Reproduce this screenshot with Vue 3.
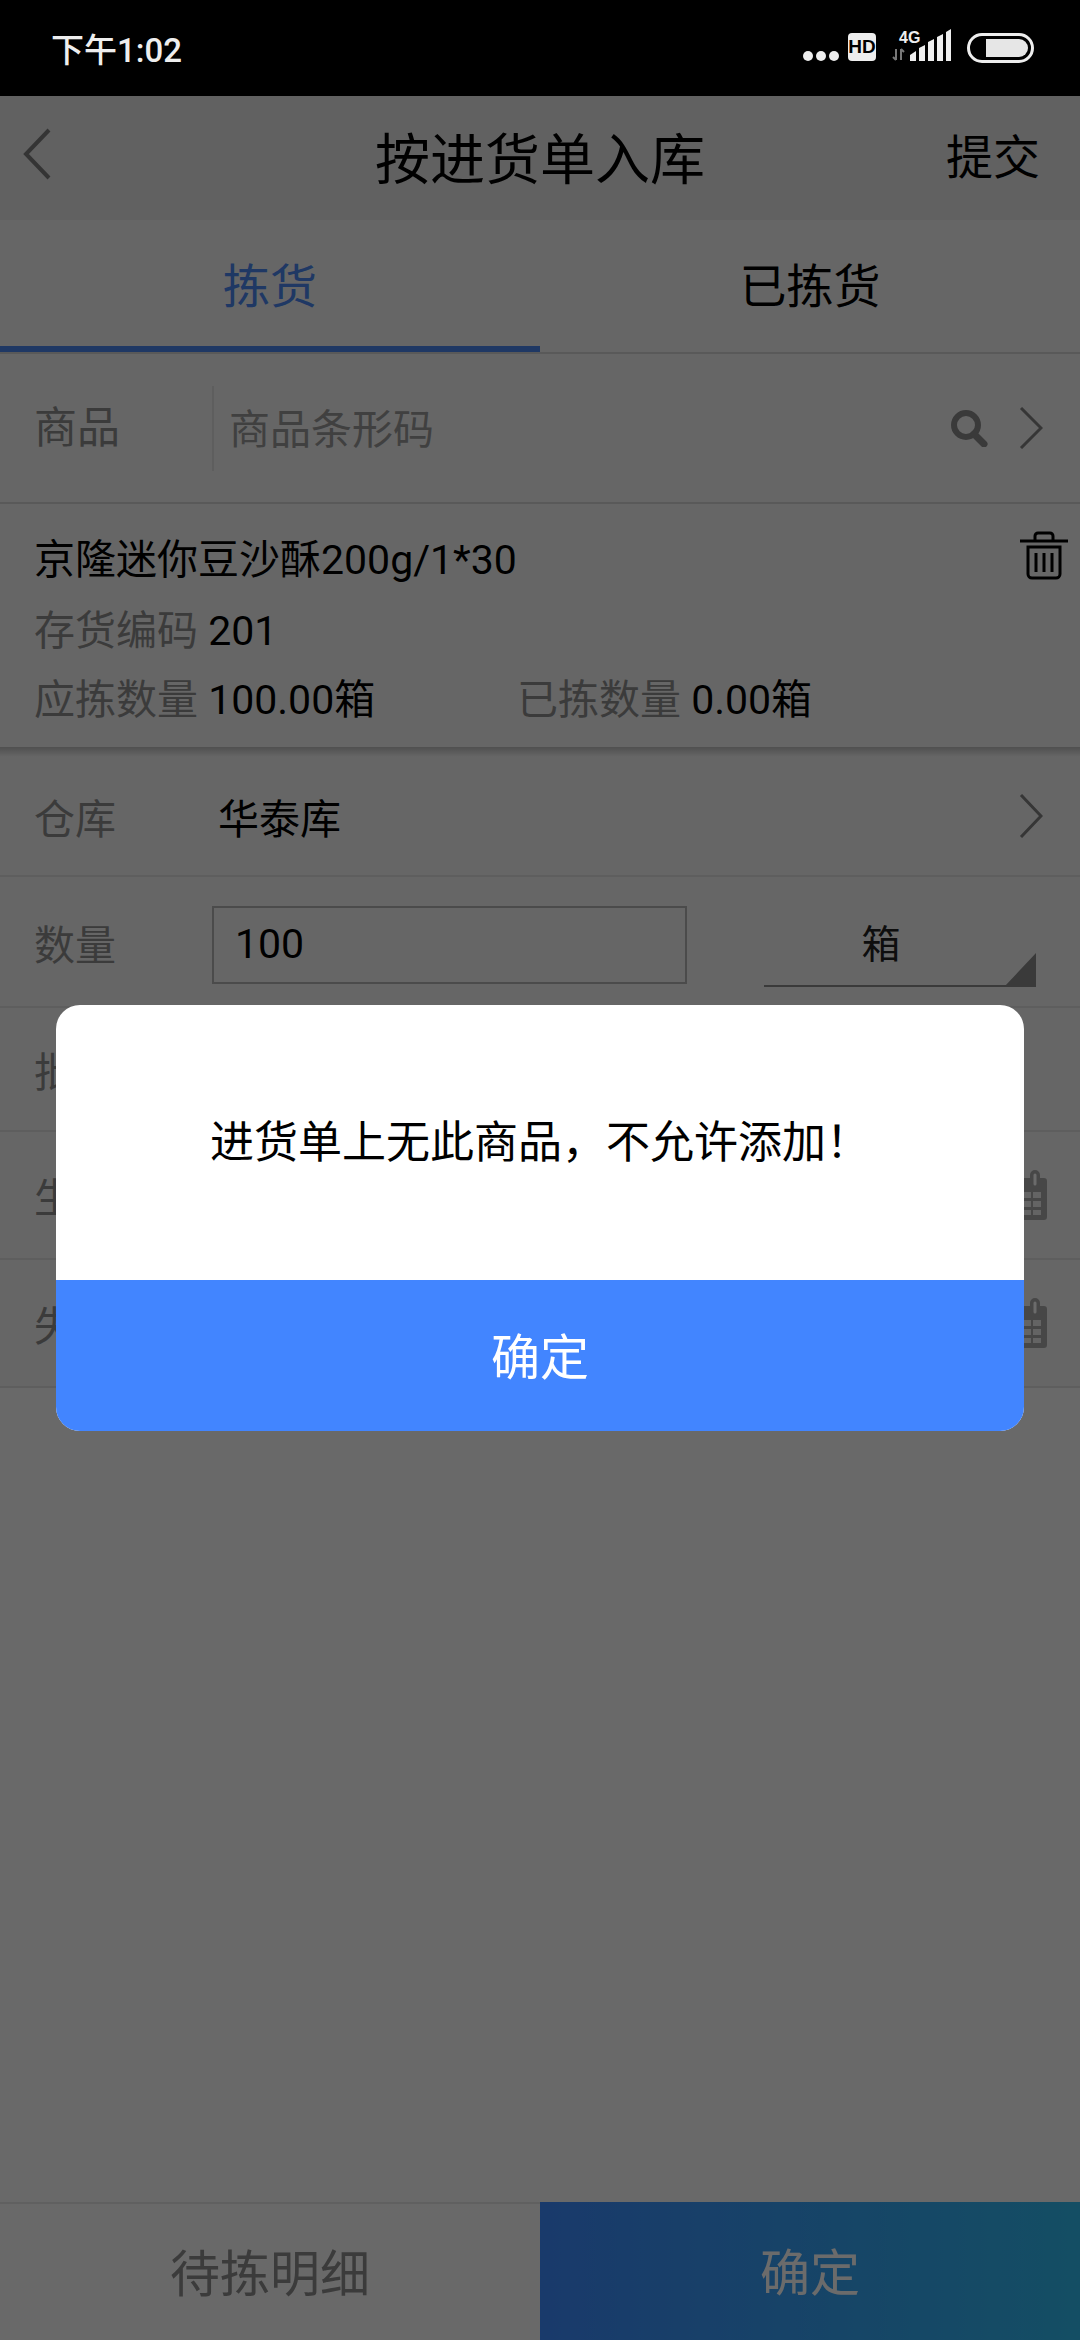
<script setup>
const dateRows = ['生产日期', '失效日期']
</script>

<template>
  <div class="page">
    <div class="status">
      <span class="time">下午1:02</span>
      <svg class="status-icons" width="240" height="40" viewBox="0 0 240 40">
        <g fill="#eee">
          <circle cx="9" cy="27" r="5" />
          <circle cx="22" cy="27" r="5" />
          <circle cx="35" cy="27" r="5" />
          <rect x="49" y="4" width="28" height="28" rx="4" />
          <path d="M111 32v-6l6-4v10zM120 32V19l6-3v16zM129 32V13l6-3v22zM138 32V8l6-3v27zM147 32V3l5-3v32z" />
        </g>
        <text x="63" y="24" class="hd">HD</text>
        <text x="100" y="14" class="net">4G</text>
        <path d="M97 20v11M94 28l3 3M102 31V20M105 23l-3-3" stroke="#777" stroke-width="2" fill="none" />
        <rect x="169.500" y="5.500" width="64" height="27" rx="13.500" fill="none" stroke="#eee" stroke-width="3" />
        <path d="M187 10h33a9 9 0 0 1 9 9a9 9 0 0 1-9 9h-33z" fill="#e6e6e6" />
      </svg>
    </div>

    <header class="nav">
      <svg class="back" width="30" height="52" viewBox="0 0 30 52">
        <path d="M27 2L4 26l23 24" fill="none" stroke="#7d7d7d" stroke-width="4" />
      </svg>
      <h1>按进货单入库</h1>
      <span class="submit">提交</span>
    </header>

    <div class="tabs">
      <div class="tab active">拣货</div>
      <div class="tab">已拣货</div>
    </div>

    <div class="goods">
      <span class="label">商品</span>
      <span class="barcode">商品条形码</span>
      <svg width="38" height="38" viewBox="0 0 38 38">
        <circle cx="16" cy="16" r="12" fill="none" stroke="#8a8a8a" stroke-width="6" />
        <path d="M24 25l10 10" stroke="#8a8a8a" stroke-width="7" stroke-linecap="round" />
      </svg>
      <svg class="chev" width="24" height="42" viewBox="0 0 24 42">
        <path d="M2 1l20 20L2 41" fill="none" stroke="#808080" stroke-width="3" />
      </svg>
    </div>

    <section class="item">
      <div class="item-name">
        <span>京隆迷你豆沙酥200g/1*30</span>
        <svg width="50" height="50" viewBox="0 0 50 50">
          <g fill="none" stroke="#000" stroke-width="3">
            <path d="M1 10h48M16 9V5a3 3 0 0 1 3-3h12a3 3 0 0 1 3 3v4" />
            <path d="M9 16h32v27a4 4 0 0 1-4 4H13a4 4 0 0 1-4-4zM17 22v19M25 22v19M33 22v19" />
          </g>
        </svg>
      </div>
      <div class="item-line"><span class="label">存货编码</span> 201</div>
      <div class="item-line qty">
        <div class="qty-col"><span class="label">应拣数量</span> 100.00箱</div>
        <div><span class="label">已拣数量</span> 0.00箱</div>
      </div>
    </section>
    <div class="shadow"></div>

    <div class="row store">
      <span class="label">仓库</span>
      <span class="store-name">华泰库</span>
      <svg class="chev" width="24" height="44" viewBox="0 0 24 44">
        <path d="M2 1l20 21L2 43" fill="none" stroke="#808080" stroke-width="3" />
      </svg>
    </div>

    <div class="row amount">
      <span class="label">数量</span>
      <div class="input">100</div>
      <div class="unit">箱</div>
    </div>

    <div class="row batch"><span class="label">批号</span></div>

    <div v-for="name in dateRows" :key="name" class="row date">
      <span class="label">{{ name }}</span>
      <svg width="48" height="50" viewBox="0 0 48 50">
        <path d="M3 8h28V5a5 5 0 0 1 10 0v3h4a3 3 0 0 1 3 3v36a3 3 0 0 1-3 3H3z" fill="#aaa" />
        <path d="M36 5v9" stroke="#fff" stroke-width="3" stroke-linecap="round" />
        <path d="M6 22h14v6H6zM24 22h8v6h-8zM34 22h8v6h-8zM6 31h14v6H6zM24 31h8v6h-8zM34 31h8v6h-8zM6 40h14v5H6zM24 40h8v5h-8zM34 40h8v5h-8z" fill="#eee" />
      </svg>
    </div>

    <div class="spacer"></div>

    <footer class="bottom">
      <div class="bottom-left">待拣明细</div>
      <div class="bottom-right">确定</div>
    </footer>

    <div class="mask">
      <div class="dialog">
        <div class="dialog-text">进货单上无此商品，不允许添加！</div>
        <div class="dialog-btn">确定</div>
      </div>
    </div>
  </div>
</template>

<style>
html, body {
  margin: 0;
  background: #fff;
}
</style>

<style scoped>
.page {
  position: relative;
  width: 1080px;
  height: 2340px;
  display: flex;
  flex-direction: column;
  background: #fff;
  color: #000;
  font-family: Roboto, "Noto Sans CJK SC", sans-serif;
  font-size: 41px;
  overflow: hidden;
}
.status {
  height: 96px;
  flex: none;
  background: #000;
  color: #eee;
  display: flex;
  align-items: center;
  justify-content: space-between;
  padding: 0 39px 0 51px;
  box-sizing: border-box;
}
.time {
  font-size: 33px;
  font-weight: 500;
}
.status-icons {
  margin: 2px 2px 0 0;
}
.hd {
  font: 700 19px "Liberation Sans", sans-serif;
  text-anchor: middle;
  fill: #000;
}
.net {
  font: 700 16px "Liberation Sans", sans-serif;
  fill: #eee;
}
.nav {
  position: relative;
  height: 124px;
  flex: none;
  background: #e6e6e6;
  display: flex;
  align-items: center;
  justify-content: center;
  padding-bottom: 6px;
  box-sizing: border-box;
}
.back {
  position: absolute;
  left: 22px;
  top: 32px;
}
.nav h1 {
  margin: 0;
  font-size: 55px;
  font-weight: 400;
}
.submit {
  position: absolute;
  right: 40px;
  top: 23px;
  font-size: 47px;
}
.tabs {
  height: 134px;
  flex: none;
  display: flex;
  border-bottom: 2px solid #d4d4d4;
  box-sizing: border-box;
  background: #f4f4f4;
}
.tab {
  flex: 1;
  display: flex;
  align-items: center;
  justify-content: center;
  padding-bottom: 8px;
  font-size: 47px;
}
.tab.active {
  color: #4a86ee;
  border-bottom: 6px solid #4a86ee;
  padding-bottom: 2px;
}
.label {
  color: #8e8e8e;
}
.goods {
  height: 150px;
  flex: none;
  display: flex;
  align-items: center;
  padding: 0 37px 0 34px;
  box-sizing: border-box;
  border-bottom: 2px solid #d4d4d4;
  background: #f4f4f4;
}
.goods .label {
  width: 178px;
  height: 85px;
  line-height: 85px;
  font-size: 43px;
  border-right: 2px solid #e0e0e0;
  flex: none;
}
.barcode {
  flex: 1;
  margin-left: 15px;
  padding-bottom: 4px;
  color: #9a9a9a;
  font-size: 41px;
}
.goods .chev {
  margin-left: 31px;
}
.item {
  height: 243px;
  flex: none;
  padding: 20px 11px 0 34px;
  box-sizing: border-box;
  background: #f4f4f4;
}
.item-name {
  height: 64px;
  display: flex;
  justify-content: space-between;
  align-items: center;
  color: #000;
}
.item-line {
  height: 70px;
  line-height: 70px;
  margin-top: 8px;
}
.qty {
  display: flex;
  margin-top: -1px;
}
.qty-col {
  width: 483px;
}
.shadow {
  height: 10px;
  flex: none;
  background: linear-gradient(#bdbdbd, #f4f4f4);
}
.row {
  flex: none;
  display: flex;
  align-items: center;
  padding: 0 37px 0 34px;
  box-sizing: border-box;
  border-bottom: 2px solid #e0e0e0;
  background: #f4f4f4;
}
.store {
  height: 120px;
}
.store-name {
  flex: 1;
  margin-left: 102px;
}
.amount {
  height: 131px;
  padding-right: 44px;
}
.amount .label {
  width: 178px;
  flex: none;
}
.input {
  width: 475px;
  height: 78px;
  line-height: 72px;
  margin-top: 6px;
  padding-left: 21px;
  box-sizing: border-box;
  border: 2px solid #b4b4b4;
}
.unit {
  position: relative;
  width: 272px;
  height: 54px;
  margin: 36px 0 0 77px;
  padding-right: 38px;
  box-sizing: border-box;
  text-align: center;
  border-bottom: 2px solid #8a8a8a;
  line-height: 24px;
  font-size: 39px;
  color: #222;
}
.unit::after {
  content: "";
  position: absolute;
  right: 0;
  bottom: -2px;
  border-left: 32px solid transparent;
  border-bottom: 34px solid #8a8a8a;
}
.batch {
  height: 124px;
}
.date {
  height: 128px;
  justify-content: space-between;
  padding-right: 33px;
}
.spacer {
  flex: 1;
  background: #fafafa;
}
.bottom {
  height: 138px;
  flex: none;
  display: flex;
  font-size: 50px;
}
.bottom-left {
  flex: 1;
  display: flex;
  align-items: center;
  justify-content: center;
  padding-bottom: 4px;
  box-sizing: border-box;
  border-top: 2px solid #e4e4e4;
  color: #8e8e8e;
  background: #fafafa;
}
.bottom-right {
  flex: 1;
  display: flex;
  align-items: center;
  justify-content: center;
  padding-bottom: 4px;
  color: #fff;
  background: linear-gradient(90deg, #3d8aff, #30baee);
}
.mask {
  position: absolute;
  left: 0;
  right: 0;
  top: 96px;
  bottom: 0;
  background: rgba(0, 0, 0, 0.58);
  display: flex;
  align-items: center;
  justify-content: center;
}
.dialog {
  width: 968px;
  height: 426px;
  border-radius: 24px;
  overflow: hidden;
  display: flex;
  flex-direction: column;
  background: #fff;
}
.dialog-text {
  height: 275px;
  flex: none;
  display: flex;
  align-items: center;
  justify-content: center;
  font-size: 44px;
  padding-bottom: 7px;
  box-sizing: border-box;
}
.dialog-btn {
  flex: 1;
  display: flex;
  align-items: center;
  justify-content: center;
  padding-bottom: 5px;
  background: #4285ff;
  color: #fff;
  font-size: 49px;
}
</style>
